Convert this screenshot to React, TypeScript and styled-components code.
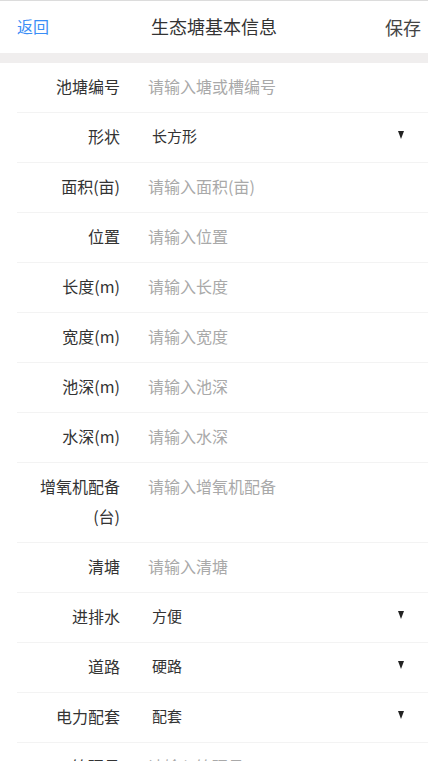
import React from "react";
import styled, { createGlobalStyle } from "styled-components";

const Global = createGlobalStyle`
  html, body { margin: 0; padding: 0; background: #fff; }
  body { font-family: "Microsoft YaHei", "Noto Sans CJK SC", "Noto Sans", sans-serif; }
  * { box-sizing: border-box; }
`;

const Page = styled.div`
  width: 428px;
  height: 761px;
  overflow: hidden;
  background: #fff;
  border-top: 1px solid #dcdcdc;
`;

const Header = styled.header`
  height: 52px;
  display: grid;
  grid-template-columns: 1fr auto 1fr;
  align-items: center;
  padding: 0 7px;
  background: #fff;
`;

const Back = styled.span`
  font-size: 16px;
  color: #3a8ef6;
  justify-self: start;
  padding-left: 10px;
  margin-top: -2px;
`;

const Title = styled.h1`
  margin: -2px 0 0;
  font-size: 18px;
  font-weight: normal;
  color: #333;
`;

const Save = styled.span`
  font-size: 18px;
  color: #444;
  justify-self: end;
`;

const Band = styled.div`
  height: 10px;
  background: #f0eeee;
`;

const Form = styled.div`
  display: flex;
  flex-direction: column;
`;

const Row = styled.div`
  display: flex;
  align-items: flex-start;
  margin-left: 17px;
  padding: 8px 24px 11px 23px;
  border-bottom: 1px solid #f3f3f3;
`;

const Label = styled.label`
  width: 80px;
  flex: none;
  text-align: right;
  font-size: 16px;
  line-height: 30px;
  color: #333;
  margin-right: 28px;
`;

const Input = styled.input`
  flex: 1;
  min-width: 0;
  border: none;
  outline: none;
  padding: 0;
  font-family: inherit;
  font-size: 16px;
  line-height: 30px;
  height: 30px;
  color: #333;
  background: transparent;
  &::placeholder { color: #a9a9a9; }
`;

const SelectBox = styled.div`
  flex: 1;
  display: flex;
  align-items: flex-start;
  justify-content: space-between;
  padding-left: 4px;
`;

const SelectValue = styled.span`
  font-size: 15px;
  line-height: 30px;
  color: #333;
`;

const Arrow = styled.span`
  width: 0;
  height: 0;
  margin-top: 10px;
  border-left: 3.5px solid transparent;
  border-right: 3.5px solid transparent;
  border-top: 8px solid #222;
`;

type Field =
  | { label: string; kind: "input"; placeholder: string }
  | { label: string; kind: "select"; value: string };

const fields: Field[] = [
  { label: "池塘编号", kind: "input", placeholder: "请输入塘或槽编号" },
  { label: "形状", kind: "select", value: "长方形" },
  { label: "面积(亩)", kind: "input", placeholder: "请输入面积(亩)" },
  { label: "位置", kind: "input", placeholder: "请输入位置" },
  { label: "长度(m)", kind: "input", placeholder: "请输入长度" },
  { label: "宽度(m)", kind: "input", placeholder: "请输入宽度" },
  { label: "池深(m)", kind: "input", placeholder: "请输入池深" },
  { label: "水深(m)", kind: "input", placeholder: "请输入水深" },
  { label: "增氧机配备(台)", kind: "input", placeholder: "请输入增氧机配备" },
  { label: "清塘", kind: "input", placeholder: "请输入清塘" },
  { label: "进排水", kind: "select", value: "方便" },
  { label: "道路", kind: "select", value: "硬路" },
  { label: "电力配套", kind: "select", value: "配套" },
  { label: "管理员", kind: "input", placeholder: "请输入管理员" },
];

export default function App() {
  return (
    <>
      <Global />
      <Page>
        <Header>
          <Back>返回</Back>
          <Title>生态塘基本信息</Title>
          <Save>保存</Save>
        </Header>
        <Band />
        <Form>
          {fields.map((f) => (
            <Row key={f.label}>
              <Label>{f.label}</Label>
              {f.kind === "input" ? (
                <Input placeholder={f.placeholder} />
              ) : (
                <SelectBox>
                  <SelectValue>{f.value}</SelectValue>
                  <Arrow />
                </SelectBox>
              )}
            </Row>
          ))}
        </Form>
      </Page>
    </>
  );
}
